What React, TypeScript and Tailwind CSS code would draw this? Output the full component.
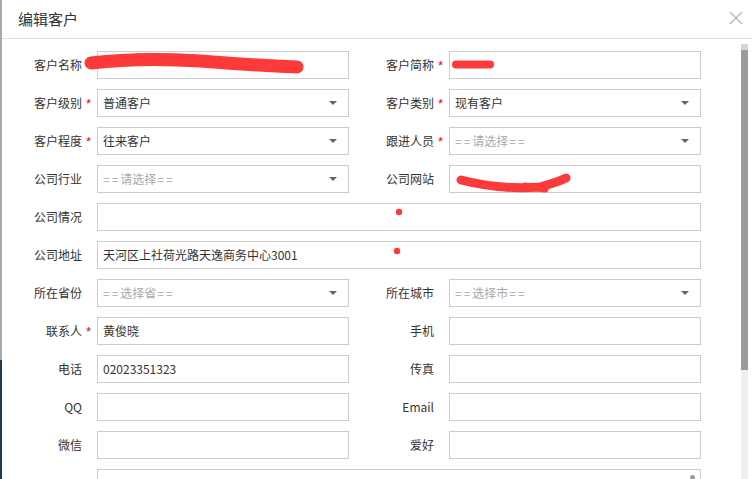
import React from "react";

const FONT = { fontFamily: '"Noto Sans CJK SC", "Noto Sans", sans-serif' };

function Label({ text, req }: { text: string; req?: boolean }) {
  return (
    <div className="flex items-center justify-end h-[28px]">
      <span className="text-[12px] text-[#333] leading-none whitespace-nowrap">{text}</span>
      <span className="w-[15px] pl-[4px] text-[13px] text-[#f00] leading-none pt-[1px]" style={{ fontFamily: '"Liberation Sans", sans-serif' }}>
        {req ? "*" : ""}
      </span>
    </div>
  );
}

function Input({ value, full }: { value?: string; full?: boolean }) {
  return (
    <div className={`h-[28px] border border-[#ccc] bg-white flex items-center pl-[5px] text-[12px] text-[#333] ${full ? "col-span-3" : ""}`}>
      {value}
    </div>
  );
}

function Placeholder({ mid }: { mid: string }) {
  return (
    <span className="text-[#a9a9a9]">
      <span className="tracking-[2px]">==</span>
      {mid}
      <span className="tracking-[2px] pl-[1px]">==</span>
    </span>
  );
}

function Select({ value, ph }: { value?: string; ph?: string }) {
  return (
    <div className="h-[28px] border border-[#ccc] bg-white flex items-center justify-between pl-[5px] pr-[11px] text-[12px]">
      {ph ? <Placeholder mid={ph} /> : <span className="text-[#333]">{value}</span>}
      <svg width="8" height="4" viewBox="0 0 8 4">
        <path d="M0 0 L8 0 L4 4 Z" fill="#666" />
      </svg>
    </div>
  );
}

export default function App() {
  return (
    <div className="relative w-[752px] h-[479px] overflow-hidden bg-white flex" style={FONT}>
      <div className="absolute left-0 top-0 w-[2px] h-full flex flex-col">
        <div className="h-[360px] bg-[#a8a8a8]" />
        <div className="flex-1 bg-[#1e3a56]" />
      </div>
      <div className="flex-1 flex flex-col">
        <div className="h-[39px] border-b border-[#e2e2e2] flex items-center justify-between pl-[18px] pr-[9px] shrink-0">
          <span className="text-[15px] text-[#333]">编辑客户</span>
          <svg width="14" height="14" viewBox="0 0 14 14" className="mt-[-2px]">
            <path d="M1 1 L13 13 M13 1 L1 13" stroke="#bdbdbd" strokeWidth="1.6" />
          </svg>
        </div>
        <div className="flex flex-1 min-h-0">
          <div className="flex-1 pt-[12px] overflow-hidden">
            <div className="grid grid-cols-[97px_252px_100px_252px] gap-y-[10px]">
              <Label text="客户名称" req />
              <Input />
              <Label text="客户简称" req />
              <Input />

              <Label text="客户级别" req />
              <Select value="普通客户" />
              <Label text="客户类别" req />
              <Select value="现有客户" />

              <Label text="客户程度" req />
              <Select value="往来客户" />
              <Label text="跟进人员" req />
              <Select ph="请选择" />

              <Label text="公司行业" />
              <Select ph="请选择" />
              <Label text="公司网站" />
              <Input />

              <Label text="公司情况" />
              <Input full />

              <Label text="公司地址" />
              <Input full value="天河区上社荷光路天逸商务中心3001" />

              <Label text="所在省份" />
              <Select ph="选择省" />
              <Label text="所在城市" />
              <Select ph="选择市" />

              <Label text="联系人" req />
              <Input value="黄俊晓" />
              <Label text="手机" />
              <Input />

              <Label text="电话" />
              <Input value="02023351323" />
              <Label text="传真" />
              <Input />

              <Label text="QQ" />
              <Input />
              <Label text="Email" />
              <Input />

              <Label text="微信" />
              <Input />
              <Label text="爱好" />
              <Input />

              <div />
              <div className="col-span-3 h-[60px] border border-[#ccc] relative pl-[5px] pt-[7px] text-[12px] text-[#222]">
                非面面 料理 伍 居占占温
                <div className="absolute right-[5px] top-[5px] w-[5px] h-[5px] rounded-full bg-[#999]" />
              </div>
            </div>
          </div>
          <div className="w-[7px] mr-[4px] mt-[5px] bg-[#f0f0f0] flex flex-col">
            <div className="h-[326px] bg-[#9c9c9c] rounded-t-[3px] flex flex-col">
              <div className="h-[6px] bg-[#d6d6d6] rounded-t-[3px]" />
            </div>
          </div>
        </div>
      </div>
      <svg className="absolute left-0 top-0 pointer-events-none" width="752" height="479">
        <path d="M91 63 Q 140 57 200 61 Q 250 65 297 67" stroke="#fc3a3a" strokeWidth="13" fill="none" strokeLinecap="round" />
        <path d="M112 59 Q 160 54 205 59" stroke="#fc3a3a" strokeWidth="7" fill="none" strokeLinecap="round" />
        <path d="M456 64.5 L 490 64.5" stroke="#fc3a3a" strokeWidth="8" fill="none" strokeLinecap="round" />
        <path d="M461 180 Q 500 190 540 187 Q 558 182 566 178" stroke="#fc3a3a" strokeWidth="9" fill="none" strokeLinecap="round" />
        <path d="M525 186 L 545 189" stroke="#fc3a3a" strokeWidth="7" fill="none" strokeLinecap="round" />
        <circle cx="399" cy="212" r="3.2" fill="#fc3a3a" />
        <circle cx="397" cy="251" r="3.2" fill="#fc3a3a" />
      </svg>
    </div>
  );
}
